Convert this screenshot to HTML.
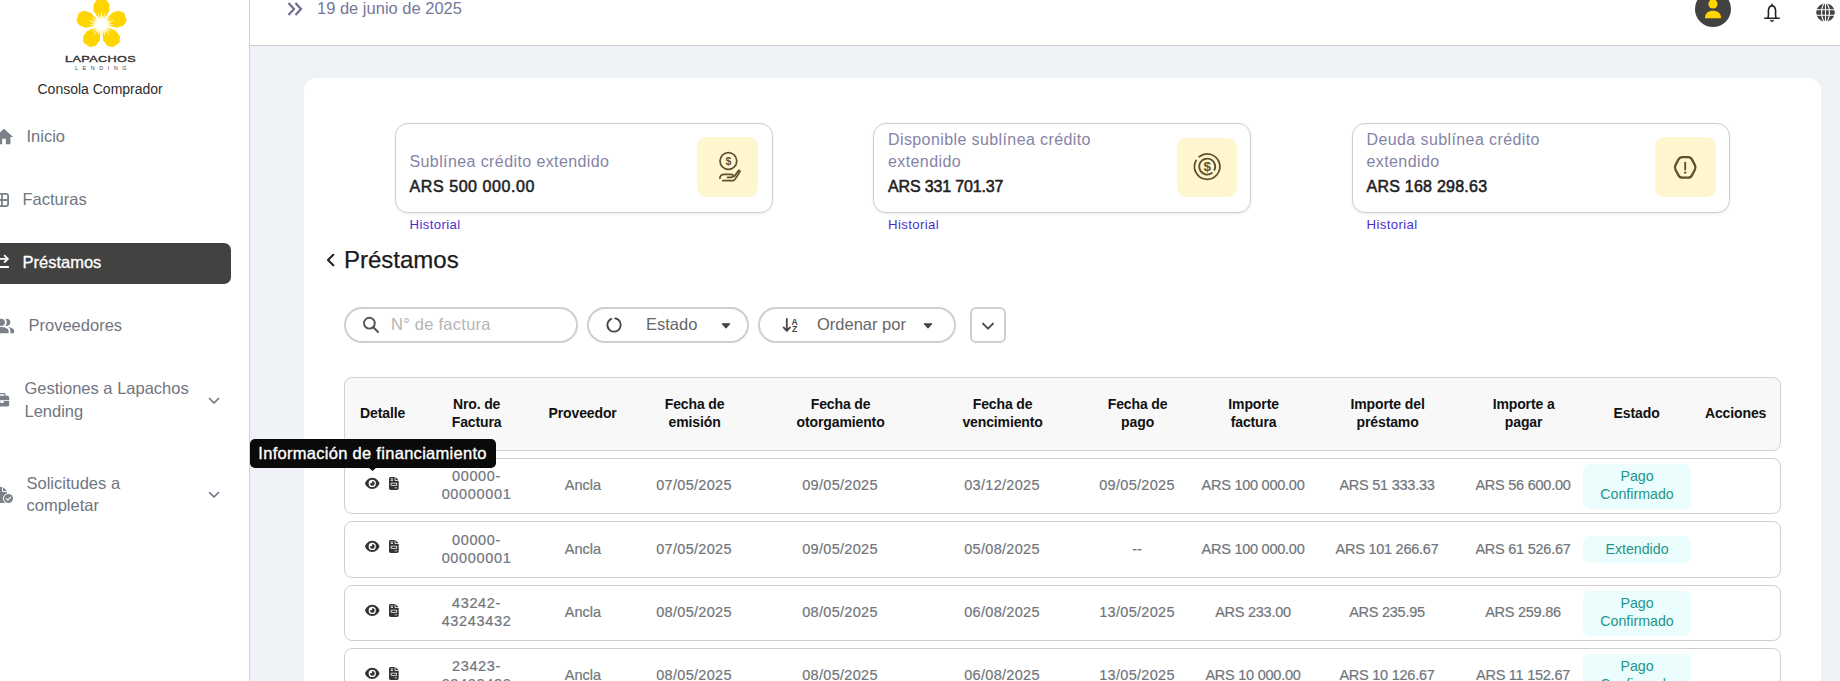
<!DOCTYPE html>
<html lang="es">
<head>
<meta charset="utf-8">
<title>Préstamos - Consola Comprador</title>
<style>
*{box-sizing:border-box;margin:0;padding:0}
html,body{width:1840px;height:681px;overflow:hidden}
body{background:#eff3f8;font-family:"Liberation Sans",sans-serif;position:relative;color:#222}
.abs{position:absolute}
.t{position:absolute;white-space:nowrap;line-height:1}
/* sidebar */
#side{position:absolute;left:0;top:0;width:250px;height:681px;background:#fff;border-right:1px solid #cfd2d6}
.mi{color:#70757f;font-size:16.5px}
/* header */
#top{position:absolute;left:250px;top:0;width:1590px;height:46px;background:#fff;border-bottom:1px solid #c9cbcf}
/* main card */
#card{position:absolute;left:303.5px;top:78px;width:1517.5px;height:640px;background:#fff;border-radius:12.5px}
.stat{position:absolute;top:123px;width:378px;height:90px;border:1px solid #cfcfcf;border-radius:13px;background:#fff;box-shadow:0 1px 3px rgba(0,0,0,.08)}
.ibox{position:absolute;width:61px;height:60px;border-radius:9px;background:#fff6cf}
.lbl{color:#8584a6;font-size:16px;letter-spacing:.4px}
.val{color:#222;font-size:16px;-webkit-text-stroke:.55px #222;letter-spacing:.58px}
.hist{color:#4a2fd0;font-size:13.2px;letter-spacing:.38px}
.pill{position:absolute;top:307px;height:36px;border:2px solid #cfcfcf;border-radius:18px;background:#fff}
.th{position:absolute;margin-top:.4px;margin-left:.6px;letter-spacing:-.12px;font-weight:bold;font-size:14px;color:#111;text-align:center;line-height:18px;transform:translateX(-50%);white-space:nowrap}
.row{position:absolute;left:344px;width:1437px;height:56px;border:1px solid #cfcfcf;border-radius:8px;background:#fff}
.td{position:absolute;font-size:14.5px;color:#71757c;-webkit-text-stroke:0.2px #71757c;text-align:center;line-height:18px;transform:translate(-50%,-50%);white-space:nowrap}
.dg{letter-spacing:.3px}.ar{letter-spacing:-.25px}
.badge{position:absolute;left:1583px;width:108px;border-radius:7px;background:#ebfdfc;color:#23958e;font-size:14.2px;line-height:18px;text-align:center}
</style>
</head>
<body>
<div id="side">
<svg class="abs" style="left:71.5px;top:-5px" width="59" height="59" viewBox="-31 -31 62 62">
<defs><radialGradient id="glow"><stop offset="0" stop-color="#fff" stop-opacity="1"/><stop offset="0.55" stop-color="#fff" stop-opacity="1"/><stop offset="1" stop-color="#fff" stop-opacity="0"/></radialGradient></defs>
<g fill="#ffd500">
<path d="M-2.2,-4 L-8.3,-14.5 L-8.3,-21.5 L-4.3,-26.4 L4.3,-26.4 L8.3,-21.5 L8.3,-14.5 L2.2,-4 Z" transform="rotate(0)"/>
<path d="M-2.2,-4 L-8.3,-14.5 L-8.3,-21.5 L-4.3,-26.4 L4.3,-26.4 L8.3,-21.5 L8.3,-14.5 L2.2,-4 Z" transform="rotate(72)"/>
<path d="M-2.2,-4 L-8.3,-14.5 L-8.3,-21.5 L-4.3,-26.4 L4.3,-26.4 L8.3,-21.5 L8.3,-14.5 L2.2,-4 Z" transform="rotate(144)"/>
<path d="M-2.2,-4 L-8.3,-14.5 L-8.3,-21.5 L-4.3,-26.4 L4.3,-26.4 L8.3,-21.5 L8.3,-14.5 L2.2,-4 Z" transform="rotate(216)"/>
<path d="M-2.2,-4 L-8.3,-14.5 L-8.3,-21.5 L-4.3,-26.4 L4.3,-26.4 L8.3,-21.5 L8.3,-14.5 L2.2,-4 Z" transform="rotate(288)"/>
</g>
<g stroke="#fff" stroke-linecap="round">
<path d="M0,0 L0,-15" stroke-width="1.3" transform="rotate(36)"/>
<path d="M0,0 L0,-15" stroke-width="1.3" transform="rotate(108)"/>
<path d="M0,0 L0,-15" stroke-width="1.3" transform="rotate(180)"/>
<path d="M0,0 L0,-15" stroke-width="1.3" transform="rotate(252)"/>
<path d="M0,0 L0,-15" stroke-width="1.3" transform="rotate(324)"/>
<path d="M0,0 L0,-13" stroke-width="0.8" transform="rotate(0)"/>
<path d="M0,0 L0,-12" stroke-width="0.6" transform="rotate(18)"/>
<path d="M0,0 L0,-12" stroke-width="0.6" transform="rotate(-18)"/>
<path d="M0,0 L0,-13" stroke-width="0.8" transform="rotate(72)"/>
<path d="M0,0 L0,-12" stroke-width="0.6" transform="rotate(90)"/>
<path d="M0,0 L0,-12" stroke-width="0.6" transform="rotate(54)"/>
<path d="M0,0 L0,-13" stroke-width="0.8" transform="rotate(144)"/>
<path d="M0,0 L0,-12" stroke-width="0.6" transform="rotate(162)"/>
<path d="M0,0 L0,-12" stroke-width="0.6" transform="rotate(126)"/>
<path d="M0,0 L0,-13" stroke-width="0.8" transform="rotate(216)"/>
<path d="M0,0 L0,-12" stroke-width="0.6" transform="rotate(234)"/>
<path d="M0,0 L0,-12" stroke-width="0.6" transform="rotate(198)"/>
<path d="M0,0 L0,-13" stroke-width="0.8" transform="rotate(288)"/>
<path d="M0,0 L0,-12" stroke-width="0.6" transform="rotate(306)"/>
<path d="M0,0 L0,-12" stroke-width="0.6" transform="rotate(270)"/>
</g>
<circle r="10.5" fill="url(#glow)"/>
</svg>
<div class="t" id="lap" style="left:65px;top:53.8px;font-size:9.6px;color:#333;-webkit-text-stroke:.4px #333;letter-spacing:0.3px;transform-origin:0 0;transform:scaleX(1.32)">LAPACHOS</div>
<div class="t" id="len" style="left:75px;top:66.4px;font-size:5.5px;color:#444;letter-spacing:4.5px">LENDING</div>
<div class="t" id="cc" style="left:37.5px;top:82px;font-size:14px;color:#2e2e2e">Consola Comprador</div>

<svg class="abs" style="left:-7.1px;top:126.2px" width="22" height="22" viewBox="0 0 24 24"><path d="M10 20v-6h4v6h5v-8h3L12 3 2 12h3v8z" fill="#7b8089"/></svg>
<svg class="abs" style="left:-6px;top:192px" width="16" height="16" viewBox="0 0 16 16"><g fill="none" stroke="#7b8089" stroke-width="1.8"><rect x="1.9" y="1.9" width="12.2" height="12.2" rx="2"/><path d="M8 1.9 V14.1 M1.9 8 H14.1"/></g></svg>
<svg class="abs" style="left:-6.8px;top:314.6px" width="22" height="22" viewBox="0 0 24 24"><g fill="#7b8089"><path d="M16.67 13.13C18.04 14.06 19 15.32 19 17v3h4v-3c0-2.18-3.57-3.47-6.33-3.87z"/><circle cx="9" cy="8" r="4"/><path d="M15 12c2.21 0 4-1.79 4-4s-1.79-4-4-4c-.47 0-.91.1-1.33.24C14.5 5.27 15 6.58 15 8s-.5 2.73-1.33 3.76c.42.14.86.24 1.33.24z"/><path d="M9 13c-2.67 0-8 1.34-8 4v3h16v-3c0-2.66-5.33-4-8-4z"/></g></svg>
<svg class="abs" style="left:-6.1px;top:393.1px" width="16" height="13.5" viewBox="0 0 512 480"><path fill="#7b8089" d="M184 48H328c4.400 0 8 3.600 8 8V96H176V56c0-4.400 3.600-8 8-8zm-56 8V96H64C28.700 96 0 124.700 0 160v96H192 320 512V160c0-35.300-28.700-64-64-64H384V56c0-30.900-25.100-56-56-56H184c-30.900 0-56 25.100-56 56zM512 288H320v32c0 17.700-14.300 32-32 32H224c-17.700 0-32-14.300-32-32V288H0V416c0 35.300 28.700 64 64 64H448c35.300 0 64-28.700 64-64V288z"/></svg>
<svg class="abs" style="left:-5.1px;top:487px" width="18" height="16" viewBox="0 0 576 512"><path fill="#7b8089" d="M0 64C0 28.700 28.700 0 64 0H224V128c0 17.700 14.300 32 32 32H384v38.600C310.100 219.500 256 287.400 256 368c0 59.100 29.100 111.300 73.700 143.300c-3.200 .5-6.400 .7-9.700 .7H64c-35.300 0-64-28.700-64-64V64zm384 64H256V0L384 128z"/><circle cx="432" cy="368" r="144" fill="#7b8089"/><path d="M364 372 L412 420 L500 326" fill="none" stroke="#fff" stroke-width="34" stroke-linecap="round" stroke-linejoin="round"/></svg>
<div class="t mi" id="m1" style="left:26.5px;top:128px">Inicio</div>
<div class="t mi" id="m2" style="left:22.5px;top:191px">Facturas</div>
<div class="abs" style="left:-8px;top:243px;width:239px;height:41px;background:#424240;border-radius:7px"></div>
<svg class="abs" style="left:-7px;top:253px" width="17" height="17" viewBox="0 0 17 17"><g fill="none" stroke="#fff" stroke-width="1.8" stroke-linecap="round" stroke-linejoin="round"><path d="M1 5.8 H15 M11.6 2.6 L15 5.8 L11.6 9"/><path d="M1 14 H15.2"/></g></svg>
<div class="t mi" id="m3" style="left:22.5px;top:254px;color:#fff;-webkit-text-stroke:0.3px #fff">Préstamos</div>
<div class="t mi" id="m4" style="left:28.5px;top:317px">Proveedores</div>
<div class="t mi" id="m5" style="left:24.5px;top:380px">Gestiones a Lapachos</div>
<div class="t mi" id="m6" style="left:24.5px;top:403px">Lending</div>
<div class="t mi" id="m7" style="left:26.5px;top:475px">Solicitudes a</div>
<div class="t mi" id="m8" style="left:26.5px;top:497px">completar</div>
<svg class="abs" style="left:207px;top:394px" width="14" height="14" viewBox="0 0 14 14"><path d="M2.5 4.5 L7 9 L11.5 4.5" fill="none" stroke="#6b7280" stroke-width="1.6" stroke-linecap="round" stroke-linejoin="round"/></svg>
<svg class="abs" style="left:207px;top:488px" width="14" height="14" viewBox="0 0 14 14"><path d="M2.5 4.5 L7 9 L11.5 4.5" fill="none" stroke="#6b7280" stroke-width="1.6" stroke-linecap="round" stroke-linejoin="round"/></svg>
</div>
<div id="top">
<svg class="abs" style="left:36px;top:0px" width="18" height="18" viewBox="0 0 18 18"><path d="M2.5 3 L8 9 L2.5 15 M9.5 3 L15 9 L9.5 15" fill="none" stroke="#6e6e91" stroke-width="2.2" stroke-linecap="butt" stroke-linejoin="miter"/></svg>
<div class="t" id="date" style="left:67px;top:0px;font-size:16.5px;color:#77779a">19 de junio de 2025</div>
<div class="abs" style="left:1445px;top:-9.5px;width:36px;height:36px;border-radius:50%;background:#424240"></div>
<svg class="abs" style="left:1452px;top:-3px" width="22" height="24" viewBox="0 0 22 24"><circle cx="11" cy="6.9" r="4.6" fill="#ffd500"/><path d="M3 21.2 C3 16 6.5 13.8 11 13.8 C15.5 13.8 19 16 19 21.2 Z" fill="#ffd500"/></svg>
<svg class="abs" style="left:1511.5px;top:2px" width="20" height="22" viewBox="0 0 20 22"><path d="M10 2.2 V3.4 M2.8 16.3 H17.2 M5.9 16 C7 13.4 6.2 11.4 6.4 9 C6.6 5.8 7.8 3.9 10 3.9 C12.2 3.9 13.4 5.8 13.6 9 C13.8 11.4 13 13.4 14.1 16" fill="none" stroke="#222" stroke-width="1.6" stroke-linecap="round" stroke-linejoin="round"/><path d="M7.9 18.3 L12.1 18.3 L10 19.9 Z" fill="#222" stroke="#222" stroke-width="0.4" stroke-linejoin="round"/></svg>
<svg class="abs" style="left:1565px;top:2.4px" width="21" height="21" viewBox="0 0 21 21"><circle cx="10.5" cy="10.5" r="9.3" fill="#424240"/><g stroke="#fff" stroke-width="1.1" fill="none"><path d="M0 7.7 H21 M0 13.3 H21 M10.5 0 V21"/><ellipse cx="10.5" cy="10.5" rx="3.9" ry="9.6"/></g></svg>
</div>
<div id="card"></div>
<div class="stat" style="left:395px"></div>
<div class="ibox" style="left:697px;top:137px;height:60.4px"></div>
<div class="t lbl" id="l0" style="left:409.5px;top:153.5px">Sublínea crédito extendido</div>
<div class="t val" id="v0" style="left:409.5px;top:178.7px">ARS 500 000.00</div>
<div class="t hist" id="h0" style="left:409.5px;top:217.7px">Historial</div>
<div class="stat" style="left:873px"></div>
<div class="ibox" style="left:1177px;top:137.5px;width:60px;height:59.5px"></div>
<div class="t lbl" id="l1" style="left:888px;top:132px">Disponible sublínea crédito</div>
<div class="t lbl" id="l1b" style="left:888px;top:153.5px">extendido</div>
<div class="t val" id="v1" style="left:888px;top:178.7px;letter-spacing:-0.16px">ARS 331 701.37</div>
<div class="t hist" id="h1" style="left:888px;top:217.7px">Historial</div>
<div class="stat" style="left:1352px"></div>
<div class="ibox" style="left:1655px;top:137px;height:60.4px"></div>
<div class="t lbl" id="l2" style="left:1366.5px;top:132px">Deuda sublínea crédito</div>
<div class="t lbl" id="l2b" style="left:1366.5px;top:153.5px">extendido</div>
<div class="t val" id="v2" style="left:1366.5px;top:178.7px;letter-spacing:0.24px">ARS 168 298.63</div>
<div class="t hist" id="h2" style="left:1366.5px;top:217.7px">Historial</div>
<svg class="abs" style="left:697px;top:137px" width="61" height="60" viewBox="0 0 61 60"><g fill="none" stroke="#5d5230" stroke-width="1.7" stroke-linecap="round" stroke-linejoin="round"><circle cx="31.4" cy="24" r="8.4"/><path d="M22.9 41.2 C22.9 38.4 25.2 37.3 27.6 37.3 L34.2 37.3 C36.6 37.3 36.6 40.4 34.2 40.4 L30.6 40.4"/><path d="M25.8 43.6 L35.8 43.6 C36.9 43.6 37.5 43.2 38 42.4 L42.9 34.8 C43.4 33.6 41.9 33 41.2 34 L37.2 39.6"/></g><text x="31.4" y="27.9" text-anchor="middle" font-family="Liberation Sans, sans-serif" font-size="10.5" font-weight="bold" fill="#5d5230">$</text></svg>
<svg class="abs" style="left:1177px;top:137px" width="61" height="60" viewBox="0 0 61 60"><g fill="none" stroke="#5d5230" stroke-width="1.8" stroke-linecap="round"><path d="M22.21 19.73 A12.7 12.7 0 1 1 19.09 23.44"/><path d="M37.51 32.85 A8 8 0 1 0 34.90 36.07"/></g><text x="30.2" y="34.4" text-anchor="middle" font-family="Liberation Sans, sans-serif" font-size="13.5" font-weight="bold" fill="#5d5230">$</text></svg>
<svg class="abs" style="left:1655px;top:137px" width="61" height="60" viewBox="0 0 61 60"><g fill="none" stroke="#5d5230" stroke-width="2.3" stroke-linecap="round" stroke-linejoin="round"><path d="M20.51 32.70 Q19.30 30.40 20.51 28.10 L23.49 22.40 Q24.70 20.10 27.30 20.10 L33.10 20.10 Q35.70 20.10 36.91 22.40 L39.89 28.10 Q41.10 30.40 39.89 32.70 L36.91 38.40 Q35.70 40.70 33.10 40.70 L27.30 40.70 Q24.70 40.70 23.49 38.40 Z"/><path d="M30.2 25.6 V32.6" stroke-width="1.9"/></g><circle cx="30.2" cy="35.6" r="1.2" fill="#5d5230"/></svg>
<svg class="abs" style="left:323px;top:251px" width="16" height="18" viewBox="0 0 16 18"><path d="M10.3 3.8 L5 9 L10.3 14.2" fill="none" stroke="#222" stroke-width="2.1" stroke-linecap="round" stroke-linejoin="round"/></svg>
<div class="t" id="hd" style="left:344px;top:248.4px;font-size:24px;color:#1a1a1a;-webkit-text-stroke:0.25px #1a1a1a">Préstamos</div>
<div class="pill" style="left:344px;width:234px"></div>
<svg class="abs" style="left:361px;top:314.6px" width="20" height="20" viewBox="0 0 20 20"><circle cx="8.4" cy="8.2" r="5.4" fill="none" stroke="#555" stroke-width="1.9"/><path d="M12.4 12.3 L17 17" stroke="#555" stroke-width="2" stroke-linecap="round"/></svg>
<div class="t" id="ph" style="left:391px;top:316px;font-size:16.5px;color:#b5b5b5;letter-spacing:.25px">N° de factura</div>
<div class="pill" style="left:587px;width:162px"></div>
<svg class="abs" style="left:605px;top:316px" width="18" height="18" viewBox="0 0 18 18"><path d="M10.2 2.4 A6.7 6.7 0 1 1 6.3 2.9" fill="none" stroke="#444" stroke-width="1.8" stroke-linecap="round"/></svg>
<div class="t" id="es" style="left:646px;top:316px;font-size:16.5px;color:#666">Estado</div>
<svg class="abs" style="left:720px;top:320px" width="12" height="10" viewBox="0 0 12 10"><path d="M2.4 3.8 H9.6 L6 7.8 Z" fill="#444" stroke="#444" stroke-width="1.2" stroke-linejoin="round"/></svg>
<div class="pill" style="left:758px;width:198px"></div>
<svg class="abs" style="left:781px;top:315px" width="20" height="20" viewBox="0 0 20 20"><path d="M5.8 3.8 V15.6 M2.6 12.4 L5.8 15.8 L9 12.4" fill="none" stroke="#444" stroke-width="1.8" stroke-linecap="round" stroke-linejoin="round"/><text x="10.6" y="9.6" font-family="Liberation Sans, sans-serif" font-size="8.6" font-weight="bold" fill="#444">A</text><text x="10.9" y="16.9" font-family="Liberation Sans, sans-serif" font-size="8.6" font-weight="bold" fill="#444">Z</text></svg>
<div class="t" id="or" style="left:817px;top:316px;font-size:16.5px;color:#666">Ordenar por</div>
<svg class="abs" style="left:922px;top:320px" width="12" height="10" viewBox="0 0 12 10"><path d="M2.4 3.8 H9.6 L6 7.8 Z" fill="#444" stroke="#444" stroke-width="1.2" stroke-linejoin="round"/></svg>
<div class="abs" style="left:970px;top:307px;width:36px;height:36px;border:2px solid #cfcfcf;border-radius:6px;background:#fff"></div>
<svg class="abs" style="left:980px;top:317.5px" width="16" height="16" viewBox="0 0 14 14"><path d="M2.6 4.9 L7 9.3 L11.4 4.9" fill="none" stroke="#4a4a4a" stroke-width="1.7" stroke-linecap="round" stroke-linejoin="round"/></svg>
<div class="abs" style="left:344px;top:377px;width:1437px;height:74px;border:1px solid #d2d2d2;border-radius:8px;background:#f8f8f8"></div>
<div class="th" id="th0" style="left:382px;top:404px">Detalle</div>
<div class="th" id="th1" style="left:476px;top:395px">Nro. de<br>Factura</div>
<div class="th" id="th2" style="left:582px;top:404px">Proveedor</div>
<div class="th" id="th3" style="left:694px;top:395px">Fecha de<br>emisión</div>
<div class="th" id="th4" style="left:840px;top:395px">Fecha de<br>otorgamiento</div>
<div class="th" id="th5" style="left:1002px;top:395px">Fecha de<br>vencimiento</div>
<div class="th" id="th6" style="left:1137px;top:395px">Fecha de<br>pago</div>
<div class="th" id="th7" style="left:1253px;top:395px">Importe<br>factura</div>
<div class="th" id="th8" style="left:1387px;top:395px">Importe del<br>préstamo</div>
<div class="th" id="th9" style="left:1523px;top:395px">Importe a<br>pagar</div>
<div class="th" id="th10" style="left:1636px;top:404px">Estado</div>
<div class="th" id="th11" style="left:1735px;top:404px">Acciones</div>
<div class="row" style="top:458px"></div>
<div class="td dg" id="r0c1" style="left:476.5px;top:485px;letter-spacing:.65px">00000-<br>00000001</div>
<div class="td" id="r0c2" style="left:583px;top:485px">Ancla</div>
<div class="td dg" id="r0c3" style="left:694px;top:485px">07/05/2025</div>
<div class="td dg" id="r0c4" style="left:840px;top:485px">09/05/2025</div>
<div class="td dg" id="r0c5" style="left:1002px;top:485px">03/12/2025</div>
<div class="td dg" id="r0c6" style="left:1137px;top:485px">09/05/2025</div>
<div class="td ar" id="r0c7" style="left:1253px;top:485px">ARS 100 000.00</div>
<div class="td ar" id="r0c8" style="left:1387px;top:485px">ARS 51 333.33</div>
<div class="td ar" id="r0c9" style="left:1523px;top:485px">ARS 56 600.00</div>
<div class="badge" id="b0" style="top:464px;height:45px;padding-top:2.8px">Pago<br>Confirmado</div>
<div class="row" style="top:521px;height:57px"></div>
<div class="td dg" id="r1c1" style="left:476.5px;top:549px;letter-spacing:.65px">00000-<br>00000001</div>
<div class="td" id="r1c2" style="left:583px;top:549px">Ancla</div>
<div class="td dg" id="r1c3" style="left:694px;top:549px">07/05/2025</div>
<div class="td dg" id="r1c4" style="left:840px;top:549px">09/05/2025</div>
<div class="td dg" id="r1c5" style="left:1002px;top:549px">05/08/2025</div>
<div class="td" id="r1c6" style="left:1137px;top:549px">--</div>
<div class="td ar" id="r1c7" style="left:1253px;top:549px">ARS 100 000.00</div>
<div class="td ar" id="r1c8" style="left:1387px;top:549px">ARS 101 266.67</div>
<div class="td ar" id="r1c9" style="left:1523px;top:549px">ARS 61 526.67</div>
<div class="badge" id="b1" style="top:536px;height:27px;padding-top:3.6px">Extendido</div>
<div class="row" style="top:585px"></div>
<div class="td dg" id="r2c1" style="left:476.5px;top:612px;letter-spacing:.65px">43242-<br>43243432</div>
<div class="td" id="r2c2" style="left:583px;top:612px">Ancla</div>
<div class="td dg" id="r2c3" style="left:694px;top:612px">08/05/2025</div>
<div class="td dg" id="r2c4" style="left:840px;top:612px">08/05/2025</div>
<div class="td dg" id="r2c5" style="left:1002px;top:612px">06/08/2025</div>
<div class="td dg" id="r2c6" style="left:1137px;top:612px">13/05/2025</div>
<div class="td ar" id="r2c7" style="left:1253px;top:612px">ARS 233.00</div>
<div class="td ar" id="r2c8" style="left:1387px;top:612px">ARS 235.95</div>
<div class="td ar" id="r2c9" style="left:1523px;top:612px">ARS 259.86</div>
<div class="badge" id="b2" style="top:591px;height:45px;padding-top:2.8px">Pago<br>Confirmado</div>
<div class="row" style="top:648px"></div>
<div class="td dg" id="r3c1" style="left:476.5px;top:675px;letter-spacing:.65px">23423-<br>23423432</div>
<div class="td" id="r3c2" style="left:583px;top:675px">Ancla</div>
<div class="td dg" id="r3c3" style="left:694px;top:675px">08/05/2025</div>
<div class="td dg" id="r3c4" style="left:840px;top:675px">08/05/2025</div>
<div class="td dg" id="r3c5" style="left:1002px;top:675px">06/08/2025</div>
<div class="td dg" id="r3c6" style="left:1137px;top:675px">13/05/2025</div>
<div class="td ar" id="r3c7" style="left:1253px;top:675px">ARS 10 000.00</div>
<div class="td ar" id="r3c8" style="left:1387px;top:675px">ARS 10 126.67</div>
<div class="td ar" id="r3c9" style="left:1523px;top:675px">ARS 11 152.67</div>
<div class="badge" id="b3" style="top:654px;height:45px;padding-top:2.8px">Pago<br>Confirmado</div>
<svg class="abs" style="left:365px;top:476.9px" width="14.5" height="12.9" viewBox="0 0 576 512"><path d="M288 32c-80.800 0-145.500 36.800-192.600 80.600C48.600 156 17.300 208 2.500 243.700c-3.300 7.900-3.300 16.700 0 24.600C17.300 304 48.600 356 95.400 399.400C142.500 443.200 207.200 480 288 480s145.500-36.800 192.600-80.600c46.800-43.500 78.100-95.400 93-131.100c3.300-7.900 3.300-16.700 0-24.600c-14.900-35.700-46.200-87.700-93-131.100C433.500 68.800 368.800 32 288 32zM144 256a144 144 0 1 1 288 0 144 144 0 1 1 -288 0zm144-64c0 35.300-28.700 64-64 64c-7.100 0-13.900-1.200-20.300-3.300c-5.500-1.800-11.900 1.600-11.700 7.400c.3 6.900 1.300 13.800 3.200 20.700c13.700 51.200 66.400 81.600 117.600 67.900s81.600-66.400 67.900-117.600c-11.100-41.500-47.800-69.400-88.600-71.100c-5.800-.2-9.200 6.100-7.400 11.700c2.100 6.400 3.300 13.200 3.300 20.300z" fill="#333"/></svg>
<svg class="abs" style="left:389px;top:476.9px" width="9.7" height="12.9" viewBox="0 0 384 512"><path d="M64 0C28.700 0 0 28.700 0 64V448c0 35.300 28.700 64 64 64H320c35.300 0 64-28.700 64-64V160H256c-17.700 0-32-14.300-32-32V0H64zM256 0V128H384L256 0zM80 64h64c8.800 0 16 7.200 16 16s-7.200 16-16 16H80c-8.800 0-16-7.200-16-16s7.200-16 16-16zm0 64h64c8.800 0 16 7.200 16 16s-7.200 16-16 16H80c-8.800 0-16-7.200-16-16s7.200-16 16-16zm16 96H288c17.700 0 32 14.300 32 32v64c0 17.700-14.300 32-32 32H96c-17.700 0-32-14.300-32-32V256c0-17.700 14.300-32 32-32zm0 32v64H288V256H96zM240 416h64c8.800 0 16 7.200 16 16s-7.200 16-16 16H240c-8.800 0-16-7.200-16-16s7.200-16 16-16z" fill="#333"/></svg>
<svg class="abs" style="left:365px;top:539.8px" width="14.5" height="12.9" viewBox="0 0 576 512"><path d="M288 32c-80.800 0-145.500 36.800-192.600 80.600C48.600 156 17.300 208 2.500 243.700c-3.300 7.900-3.300 16.700 0 24.600C17.300 304 48.600 356 95.400 399.400C142.500 443.200 207.200 480 288 480s145.500-36.800 192.600-80.600c46.800-43.500 78.100-95.400 93-131.100c3.300-7.900 3.300-16.700 0-24.600c-14.900-35.700-46.200-87.700-93-131.100C433.500 68.800 368.800 32 288 32zM144 256a144 144 0 1 1 288 0 144 144 0 1 1 -288 0zm144-64c0 35.300-28.700 64-64 64c-7.100 0-13.900-1.200-20.300-3.300c-5.500-1.800-11.900 1.600-11.700 7.400c.3 6.900 1.300 13.800 3.200 20.700c13.700 51.200 66.400 81.600 117.600 67.900s81.600-66.400 67.900-117.600c-11.100-41.500-47.800-69.400-88.600-71.100c-5.800-.2-9.200 6.100-7.400 11.700c2.100 6.400 3.300 13.200 3.300 20.300z" fill="#333"/></svg>
<svg class="abs" style="left:389px;top:539.9px" width="9.7" height="12.9" viewBox="0 0 384 512"><path d="M64 0C28.700 0 0 28.700 0 64V448c0 35.300 28.700 64 64 64H320c35.300 0 64-28.700 64-64V160H256c-17.700 0-32-14.300-32-32V0H64zM256 0V128H384L256 0zM80 64h64c8.800 0 16 7.200 16 16s-7.200 16-16 16H80c-8.800 0-16-7.200-16-16s7.200-16 16-16zm0 64h64c8.800 0 16 7.200 16 16s-7.200 16-16 16H80c-8.800 0-16-7.200-16-16s7.200-16 16-16zm16 96H288c17.700 0 32 14.300 32 32v64c0 17.700-14.300 32-32 32H96c-17.700 0-32-14.300-32-32V256c0-17.700 14.300-32 32-32zm0 32v64H288V256H96zM240 416h64c8.800 0 16 7.200 16 16s-7.200 16-16 16H240c-8.800 0-16-7.200-16-16s7.200-16 16-16z" fill="#333"/></svg>
<svg class="abs" style="left:365px;top:603.8px" width="14.5" height="12.9" viewBox="0 0 576 512"><path d="M288 32c-80.800 0-145.500 36.800-192.600 80.600C48.600 156 17.300 208 2.500 243.700c-3.300 7.900-3.300 16.700 0 24.600C17.300 304 48.600 356 95.400 399.400C142.500 443.200 207.200 480 288 480s145.500-36.800 192.600-80.600c46.800-43.500 78.100-95.400 93-131.100c3.300-7.900 3.300-16.700 0-24.600c-14.900-35.700-46.200-87.700-93-131.100C433.500 68.800 368.800 32 288 32zM144 256a144 144 0 1 1 288 0 144 144 0 1 1 -288 0zm144-64c0 35.300-28.700 64-64 64c-7.100 0-13.900-1.200-20.300-3.300c-5.500-1.800-11.900 1.600-11.700 7.400c.3 6.900 1.300 13.800 3.200 20.700c13.700 51.200 66.400 81.600 117.600 67.900s81.600-66.400 67.900-117.600c-11.100-41.500-47.800-69.400-88.600-71.100c-5.800-.2-9.200 6.100-7.400 11.700c2.100 6.400 3.300 13.200 3.300 20.300z" fill="#333"/></svg>
<svg class="abs" style="left:389px;top:603.9px" width="9.7" height="12.9" viewBox="0 0 384 512"><path d="M64 0C28.700 0 0 28.700 0 64V448c0 35.300 28.700 64 64 64H320c35.300 0 64-28.700 64-64V160H256c-17.700 0-32-14.300-32-32V0H64zM256 0V128H384L256 0zM80 64h64c8.800 0 16 7.200 16 16s-7.200 16-16 16H80c-8.800 0-16-7.200-16-16s7.200-16 16-16zm0 64h64c8.800 0 16 7.200 16 16s-7.200 16-16 16H80c-8.800 0-16-7.200-16-16s7.200-16 16-16zm16 96H288c17.700 0 32 14.300 32 32v64c0 17.700-14.300 32-32 32H96c-17.700 0-32-14.300-32-32V256c0-17.700 14.300-32 32-32zm0 32v64H288V256H96zM240 416h64c8.800 0 16 7.200 16 16s-7.200 16-16 16H240c-8.800 0-16-7.200-16-16s7.200-16 16-16z" fill="#333"/></svg>
<svg class="abs" style="left:365px;top:666.8px" width="14.5" height="12.9" viewBox="0 0 576 512"><path d="M288 32c-80.800 0-145.500 36.800-192.600 80.600C48.600 156 17.300 208 2.500 243.700c-3.300 7.900-3.300 16.700 0 24.600C17.300 304 48.600 356 95.400 399.400C142.500 443.200 207.200 480 288 480s145.500-36.800 192.600-80.600c46.800-43.500 78.100-95.400 93-131.100c3.300-7.900 3.300-16.700 0-24.600c-14.900-35.700-46.200-87.700-93-131.100C433.500 68.800 368.800 32 288 32zM144 256a144 144 0 1 1 288 0 144 144 0 1 1 -288 0zm144-64c0 35.300-28.700 64-64 64c-7.100 0-13.900-1.200-20.300-3.300c-5.500-1.800-11.900 1.600-11.700 7.400c.3 6.900 1.300 13.800 3.200 20.700c13.700 51.200 66.400 81.600 117.600 67.900s81.600-66.400 67.900-117.600c-11.100-41.500-47.800-69.400-88.600-71.100c-5.800-.2-9.200 6.100-7.400 11.700c2.100 6.400 3.300 13.200 3.300 20.300z" fill="#333"/></svg>
<svg class="abs" style="left:389px;top:666.9px" width="9.7" height="12.9" viewBox="0 0 384 512"><path d="M64 0C28.700 0 0 28.700 0 64V448c0 35.300 28.700 64 64 64H320c35.300 0 64-28.700 64-64V160H256c-17.700 0-32-14.300-32-32V0H64zM256 0V128H384L256 0zM80 64h64c8.800 0 16 7.200 16 16s-7.200 16-16 16H80c-8.800 0-16-7.200-16-16s7.200-16 16-16zm0 64h64c8.800 0 16 7.200 16 16s-7.200 16-16 16H80c-8.800 0-16-7.200-16-16s7.200-16 16-16zm16 96H288c17.700 0 32 14.300 32 32v64c0 17.700-14.300 32-32 32H96c-17.700 0-32-14.300-32-32V256c0-17.700 14.300-32 32-32zm0 32v64H288V256H96zM240 416h64c8.800 0 16 7.200 16 16s-7.200 16-16 16H240c-8.800 0-16-7.200-16-16s7.200-16 16-16z" fill="#333"/></svg>
<div class="abs" style="left:250px;top:439px;width:246px;height:28.5px;background:#0a0a0a;border-radius:5px"></div>
<svg class="abs" style="left:367.7px;top:467px" width="9" height="4" viewBox="0 0 9 4"><path d="M0 0 H9 L4.5 4 Z" fill="#0a0a0a"/></svg>
<div class="t" id="tip" style="left:258.3px;top:445px;font-size:16.5px;color:#fff;-webkit-text-stroke:0.35px #fff;letter-spacing:0.29px">Información de financiamiento</div>

</body>
</html>
